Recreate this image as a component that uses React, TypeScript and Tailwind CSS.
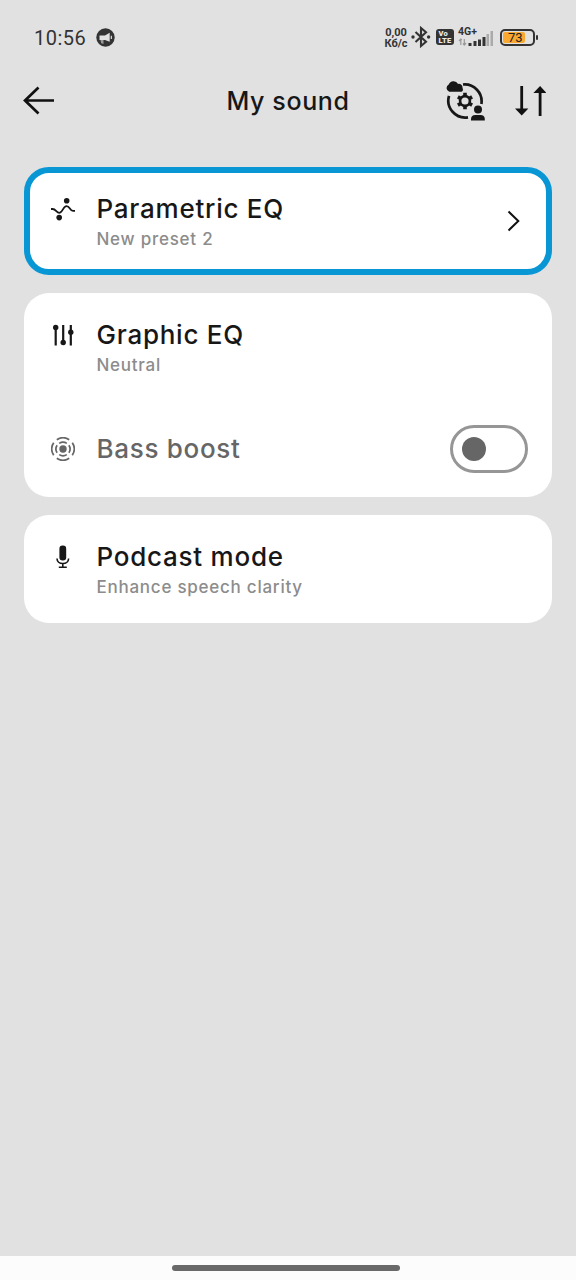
import type { ReactNode } from "react";

function StatusBar() {
  return (
    <div className="h-[72px] pl-[34px] pr-[38px] flex items-center justify-between text-[#333] pb-0.5 pt-1 font-['Roboto','Liberation_Sans',sans-serif]">
      <div className="flex items-center gap-[10px] pt-px">
        <span className="text-[20px] leading-6 tracking-[0.5px]">10:56</span>
        <svg width="19" height="19" viewBox="0 0 19 19">
          <circle cx="9.500" cy="9.500" r="9.200" fill="#333" />
          <path d="M3.500 7.500h5.500l4.700-2.700v8.900L9 12H3.500z" fill="#e1e1e1" />
          <path d="M4.500 12h3v4l-2.300-.8z" fill="#999" />
          <path d="M15.300 7.800v3.200" fill="none" stroke="#e1e1e1" strokeWidth="1.200" />
        </svg>
      </div>
      <div className="flex items-center">
        <div className="w-[24px] mr-px text-[11px] leading-[11px] font-bold text-center whitespace-nowrap pt-0.5">
          <div>0,00</div>
          <div>Кб/с</div>
        </div>
        <svg className="ml-[2px]" width="20" height="22" viewBox="0 0 20 22" fill="none" stroke="#333" strokeWidth="2.100">
          <path d="M4.500 6l10.500 9.800L10 20V2l5 4.200L4.500 16" />
          <circle cx="2" cy="11" r="1.700" fill="#333" stroke="none" />
          <circle cx="17.600" cy="11" r="1.700" fill="#333" stroke="none" />
        </svg>
        <div className="ml-[5px] w-[18px] h-4 rounded-[3px] bg-[#333] text-[#e8e8e8] text-[7.5px] leading-[7px] font-black pl-[2.5px] pt-px tracking-[0.2px]">
          <div>Vo</div>
          <div>LTE</div>
        </div>
        <div className="ml-[4px] w-[35px] h-[20px] flex flex-col">
          <span className="text-[10.5px] leading-[10px] font-bold">4G+</span>
          <svg className="-mt-2 shrink-0" width="35" height="18" viewBox="0 0 35 18">
            <path d="M2.800 16v-6M1 12l1.800-2 1 1M6.300 10v6M5 14.500l1.300 1.500 1.700-2" fill="none" stroke="#999" strokeWidth="1.200" />
            <path d="M11 14h3v3h-3zM16 12h3v5h-3zM20.500 10.500h3V17h-3zM25 8h3v9h-3z" fill="#333" transform="translate(-.5)" />
            <path d="M28.500 5h2.500v12h-2.500zM32.500 2h2.500v15h-2.500z" fill="#aaa" />
          </svg>
        </div>
        <div className="ml-[7px] flex items-center">
          <div className="w-[35px] h-[17px] rounded-[5px] border-2 border-[#333] p-px">
            <div className="w-[22px] h-full rounded-[2px] bg-[#f9a930] pl-[5px] flex items-center">
              <span className="text-[13px] leading-none text-[#222]">73</span>
            </div>
          </div>
          <div className="ml-px w-[2px] h-[5px] rounded-full bg-[#333]" />
        </div>
      </div>
    </div>
  );
}

function PersonalizeIcon() {
  return (
    <svg width="40" height="40" viewBox="0 0 40 40" fill="none" stroke="#171717">
      <path d="M18 3.500A17 17 0 0 1 36.400 23M4 14.800A17 17 0 0 0 23 36.300" strokeWidth="2.700" />
      <path d="M4.200 10.800a4 4 0 0 1-.5-7.300 5.200 5.200 0 0 1 9.400-.6 3.800 3.800 0 0 1 4.400 4.100c1.100 1.500.2 3.800-2 3.800z" fill="#171717" stroke="none" />
      <circle cx="20" cy="20" r="4.900" strokeWidth="2.600" />
      <path d="M20 15v-3.300M20 25v3.300M15.700 17.500l-2.800-1.600M24.300 22.500l2.800 1.600M24.300 17.500l2.800-1.600M15.700 22.500l-2.800 1.600" strokeWidth="3.600" />
      <circle cx="33" cy="28.500" r="4" fill="#171717" stroke="none" />
      <path d="M26 39.500V38c0-2.700 1.700-4 4.300-4h5.200c2.600 0 4.300 1.300 4.300 4v1.500z" fill="#171717" stroke="none" />
    </svg>
  );
}

function Header() {
  return (
    <header className="h-[58px] pl-[23px] pr-[25px] grid grid-cols-[120px_1fr_120px] items-center">
      <svg width="32" height="32" viewBox="0 0 32 32" fill="none" stroke="#111" strokeWidth="2.700">
        <path d="M1.500 15.500H31M15.500 2.500L2 15.500l13.500 13" />
      </svg>
      <h1 className="pl-0.5 text-center text-[25px] leading-8 font-medium tracking-[0.6px] text-[#171717]">My sound</h1>
      <div className="flex items-center justify-end gap-[29px] pr-[5px]">
        <PersonalizeIcon />
        <svg width="32" height="32" viewBox="0 0 32 32" className="shrink-0" fill="#111">
          <path d="M6.300 1h2.800v22.500h5.300L7.700 30.500 1 23.500h5.300zM24.700 31h2.800V8h5L26.100 1 19.400 8h5.300z" />
        </svg>
      </div>
    </header>
  );
}

function ParametricIcon() {
  return (
    <svg width="24" height="24" viewBox="0 0 24 24">
      <path d="M0 12h1.500c3.500 0 4 3.800 6.700 3.800 3.600 0 3.600-6.600 7.400-6.600 3.500 0 3 4.600 6.400 4.600h2" fill="none" stroke="#171717" strokeWidth="1.800" />
      <circle cx="15.700" cy="3.700" r="2.800" fill="#171717" />
      <circle cx="8.200" cy="20.600" r="2.800" fill="#171717" />
    </svg>
  );
}

function GraphicIcon() {
  return (
    <svg width="24" height="24" viewBox="0 0 24 24" fill="#171717">
      <path d="M3.600 2h2.200v20.500H3.600zM11.100 2h2.200v20h-2.200zM18.700 2h2.200v20.500h-2.200z" />
      <circle cx="4.700" cy="4.500" r="2.700" />
      <circle cx="12.200" cy="19.500" r="2.700" />
      <circle cx="19.800" cy="9.200" r="2.700" />
    </svg>
  );
}

function BassIcon() {
  return (
    <svg width="24" height="24" viewBox="0 0 24 24" fill="none" stroke="#666" strokeWidth="1.700">
      <circle cx="12" cy="12" r="3.700" fill="#666" stroke="none" />
      <path d="M8.200 6.400a6.800 6.800 0 0 1 7.600 0M8.200 17.600a6.800 6.800 0 0 0 7.600 0M6.100 8.200a7 7 0 0 0 0 7.600M17.900 8.200a7 7 0 0 1 0 7.600" />
      <path d="M5.800 2.700a11.200 11.200 0 0 1 12.400 0M5.800 21.300a11.200 11.200 0 0 0 12.400 0M2.700 5.800a11.200 11.200 0 0 0 0 12.400M21.300 5.800a11.200 11.200 0 0 1 0 12.400" />
    </svg>
  );
}

function MicIcon() {
  return (
    <svg width="24" height="24" viewBox="0 0 24 24" fill="none" stroke="#171717" strokeWidth="1.600">
      <rect x="8.400" y="0.500" width="6.800" height="15" rx="3.200" fill="#171717" stroke="none" />
      <path d="M6 13.500c0 3 2.400 5 5.800 5s5.800-2 5.800-5M11.800 18.500v4M7.800 22.300h8" />
    </svg>
  );
}

function Row({ icon, title, subtitle, children }: { icon: ReactNode; title: string; subtitle: string; children?: ReactNode }) {
  return (
    <div className="h-[108px] pl-[27px] pr-[31px] flex items-center">
      <div className="self-start pt-[30px] w-[45.5px] shrink-0">{icon}</div>
      <div className="flex-1 flex flex-col gap-0.5 pt-0.5">
        <div className="text-[26px] leading-8 font-[450] tracking-[0.75px] text-[#171717]">{title}</div>
        <div className="text-[17px] leading-6 font-[450] tracking-[0.75px] text-[#8c8c8c]">{subtitle}</div>
      </div>
      {children}
    </div>
  );
}

export default function App() {
  return (
    <div className="w-full h-[1280px] bg-[#e1e1e1] flex flex-col font-['Inter','Roboto',sans-serif]">
      <StatusBar />
      <Header />
      <main className="flex-1 px-6 pt-[37px] flex flex-col gap-[18px]">
        <section className="h-[108px] rounded-[25px] bg-white border-6 border-[#0896d5]">
          <div className="-m-[6px]">
            <Row icon={<ParametricIcon />} title="Parametric EQ" subtitle="New preset 2">
              <svg width="14" height="22" viewBox="0 0 14 22" fill="none" stroke="#111" strokeWidth="2">
                <path d="M1.500 1.500L11.300 11 1.500 20.500" />
              </svg>
            </Row>
          </div>
        </section>
        <section className="rounded-[25px] bg-white">
          <Row icon={<GraphicIcon />} title="Graphic EQ" subtitle="Neutral" />
          <div className="h-[96px] pl-[27px] pr-6 flex items-center">
            <div className="w-[45.5px] shrink-0">
              <BassIcon />
            </div>
            <div className="flex-1 text-[26px] leading-8 font-[450] tracking-[0.7px] text-[#666]">Bass boost</div>
            <button role="switch" aria-checked="false" aria-label="Bass boost" className="w-[78px] h-[48px] rounded-full border-3 border-[#969696] flex items-center pl-[9px]">
              <span className="size-6 rounded-full bg-[#666]" />
            </button>
          </div>
        </section>
        <section className="rounded-[25px] bg-white">
          <Row icon={<MicIcon />} title="Podcast mode" subtitle="Enhance speech clarity" />
        </section>
      </main>
      <div className="h-6 pr-1 bg-[#fcfcfc] flex items-center justify-center">
        <div className="w-[228px] h-[6px] rounded-full bg-[#696969]" />
      </div>
    </div>
  );
}
